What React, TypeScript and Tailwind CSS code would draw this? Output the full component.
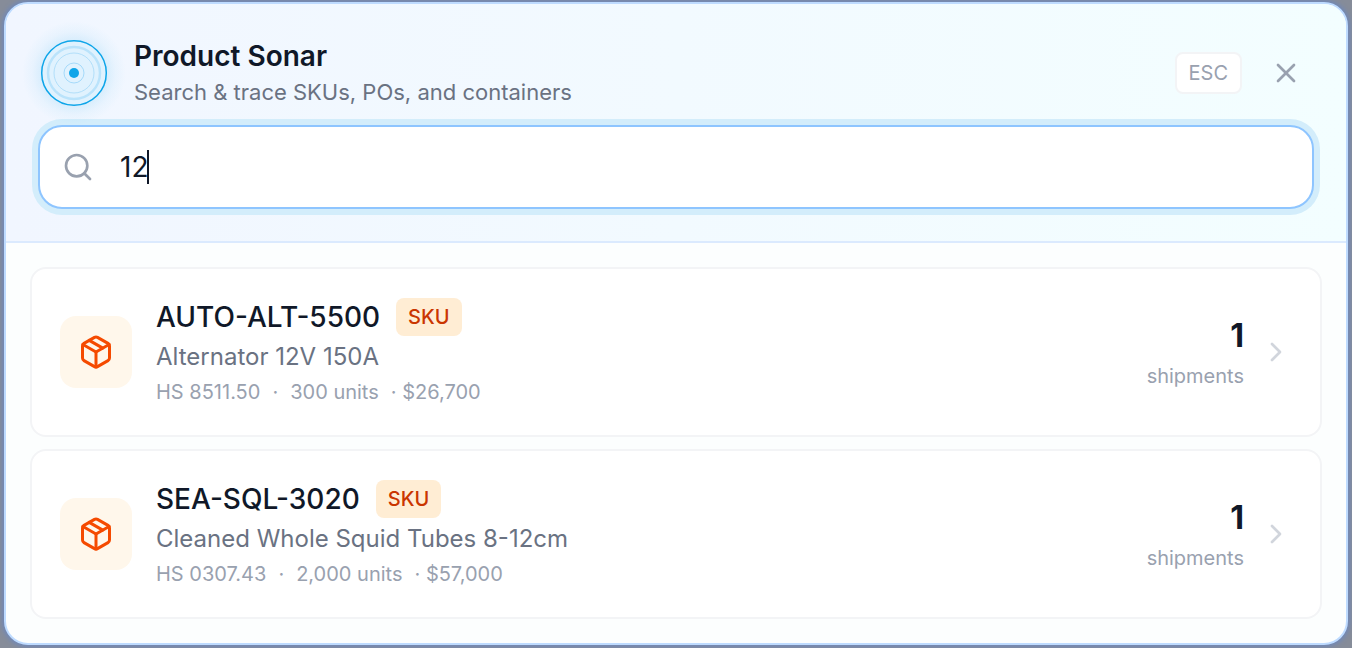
import React, { useState } from 'react';
import { ChevronRight, Package, Search, X } from 'lucide-react';

interface Result {
  sku: string;
  name: string;
  hs: string;
  units: string;
  value: string;
  shipments: number;
}

const RESULTS: Result[] = [
  { sku: 'AUTO-ALT-5500', name: 'Alternator 12V 150A', hs: '8511.50', units: '300', value: '$26,700', shipments: 1 },
  { sku: 'SEA-SQL-3020', name: 'Cleaned Whole Squid Tubes 8-12cm', hs: '0307.43', units: '2,000', value: '$57,000', shipments: 1 },
];

const SonarIcon: React.FC = () => (
  <svg viewBox="0 0 72 72" fill="none" className="size-[72px] shrink-0 overflow-visible" aria-hidden="true">
    <defs>
      <radialGradient id="sonar-glow">
        <stop offset="0.6" stopColor="#0ea5e9" stopOpacity="0.12" />
        <stop offset="0.8" stopColor="#0ea5e9" stopOpacity="0.04" />
        <stop offset="1" stopColor="#0ea5e9" stopOpacity="0" />
      </radialGradient>
    </defs>
    <circle cx="36" cy="36" r="52" fill="url(#sonar-glow)" />
    <circle cx="36" cy="36" r="32.3" fill="#e0f2fe" stroke="#0ea5e9" strokeWidth="1.5" />
    <circle cx="36" cy="36" r="26" stroke="#bae3fb" strokeWidth="2.5" />
    <circle cx="36" cy="36" r="20" stroke="#b2dffa" />
    <circle cx="36" cy="36" r="10" stroke="#a5dafa" />
    <circle cx="36" cy="36" r="5" fill="#0ea5e9" />
  </svg>
);

const ResultCard: React.FC<{ result: Result }> = ({ result }) => (
  <li>
    <button
      type="button"
      className="flex w-full items-center gap-6 rounded-2xl border-2 border-gray-100 bg-white p-7 text-left"
    >
      <span className="flex size-[72px] shrink-0 items-center justify-center rounded-2xl bg-[#fff7eb] text-[#f54a00]">
        <Package size={36} />
      </span>
      <span className="flex min-w-0 flex-1 flex-col">
        <span className="flex h-10 items-center gap-4">
          <span className="text-[28px] leading-10 font-medium text-gray-900">{result.sku}</span>
          <span className="rounded-lg bg-[#ffedd4] px-3 py-1 text-[20px] leading-[30px] font-medium text-[#ca3500]">SKU</span>
        </span>
        <span className="text-[24px] leading-10 text-gray-500">{result.name}</span>
        <span className="flex text-[20px] leading-[30px] text-gray-400">
          <span>HS {result.hs}</span>
          <span className="mx-3">·</span>
          <span>{result.units} units</span>
          <span className="ml-3">· {result.value}</span>
        </span>
      </span>
      <span className="flex flex-col items-end">
        <span className="text-[32px] leading-12 font-bold text-gray-900">{result.shipments}</span>
        <span className="text-[20px] leading-8 text-gray-400">shipments</span>
      </span>
      <ChevronRight size={32} className="-ml-2 shrink-0 text-gray-300" />
    </button>
  </li>
);

export default function App() {
  const [query, setQuery] = useState('12');

  return (
    <div className="min-h-screen bg-[#868c99] px-1 pt-0.5 pb-[3px] font-[Inter,sans-serif]">
      <main className="overflow-hidden rounded-3xl border-2 border-[#bedbff] bg-[#fcfefe] shadow-[0_0_4px_2px_#7088b8]">
        <header className="border-b-2 border-[#dbeafe] bg-linear-to-r from-[#f1f6ff] to-[#f3feff] px-8 py-8">
          <div className="mb-[15px] flex items-center gap-6">
            <SonarIcon />
            <div className="min-w-0 flex-1 pb-0.5">
              <h1 className="text-[28px] leading-10 font-semibold text-gray-900">Product Sonar</h1>
              <p className="text-[22px] leading-8 text-gray-500">Search &amp; trace SKUs, POs, and containers</p>
            </div>
            <div className="flex items-center gap-4">
              <kbd className="rounded-lg border-2 border-gray-100 bg-white px-3 py-1 font-[Inter,sans-serif] text-[20px] leading-[30px] text-gray-400">
                ESC
              </kbd>
              <button type="button" aria-label="Close" className="p-3 text-gray-400">
                <X size={32} />
              </button>
            </div>
          </div>
          <label className="flex h-[84px] cursor-text items-center rounded-3xl border-2 border-[#8ec5ff] bg-white px-[22px] ring-6 ring-[#d3edfb]">
            <Search size={32} className="mr-[26px] shrink-0 text-gray-400" />
            <input
              type="text"
              aria-label="Search products"
              value={query}
              onChange={(e) => setQuery(e.target.value)}
              className="field-sizing-content text-[28px] leading-10 text-gray-900 caret-transparent outline-none"
            />
            <span className="-ml-px h-[34px] w-0.5 bg-gray-900" />
          </label>
        </header>
        <ul className="flex flex-col gap-3 p-6">
          {RESULTS.map((result) => (
            <ResultCard key={result.sku} result={result} />
          ))}
        </ul>
      </main>
    </div>
  );
}
